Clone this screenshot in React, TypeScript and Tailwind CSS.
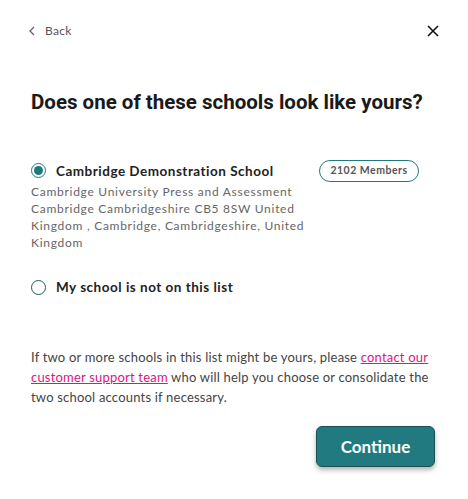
const App = () => {
  return (
    <main className="w-[468px] h-[499px] bg-white font-['Lato',sans-serif] text-[#333]">
      {/* TOP BAR */}
      <div className="flex items-center justify-between pl-[28px] pr-[29px] pt-[22px]">
        <button className="flex items-center gap-[9px] text-[12px] tracking-[0.3px] text-[#555]">
          <svg width="8" height="10" viewBox="0 0 8 10" fill="none">
            <path d="M6 1 L2 5 L6 9" stroke="#666" strokeWidth="1.3" />
          </svg>
          Back
        </button>
        <button aria-label="close">
          <svg width="12" height="12" viewBox="0 0 12 12" fill="none">
            <path d="M1 1 L11 11 M11 1 L1 11" stroke="#111" strokeWidth="1.6" />
          </svg>
        </button>
      </div>

      <div className="px-[31px]">
        <h1 className="mt-[47px] font-['Roboto',sans-serif] text-[20.5px] font-bold text-[#1a1a1a]">
          Does one of these schools look like yours?
        </h1>

        {/* OPTIONS */}
        <div className="mt-[43px] flex flex-col gap-[26px]">
          <label className="flex items-start justify-between">
            <div className="flex flex-col">
              <div className="flex items-center gap-[10px]">
                <span className="flex h-[15px] w-[15px] items-center justify-center rounded-full border-[1.5px] border-[#1f7a80]">
                  <span className="h-[9px] w-[9px] rounded-full bg-[#1f7a80]" />
                </span>
                <span className="text-[13.5px] font-bold tracking-[0.5px] text-[#222]">
                  Cambridge Demonstration School
                </span>
              </div>
              <p className="mt-[2px] w-[280px] text-[12px] leading-[17px] tracking-[0.72px] text-[#666]">
                Cambridge University Press and Assessment Cambridge
                Cambridgeshire CB5 8SW United Kingdom , Cambridge,
                Cambridgeshire, United Kingdom
              </p>
            </div>
            <span className="mr-[18px] mt-[-1px] flex h-[22px] w-[100px] shrink-0 items-center justify-center rounded-full border-[1.5px] border-[#1f7a80] text-[10.5px] font-bold tracking-[0.5px] text-[#555]">
              2102 Members
            </span>
          </label>

          <label className="flex items-center gap-[10px]">
            <span className="h-[15px] w-[15px] rounded-full border-[1.5px] border-[#1f5a66]" />
            <span className="text-[13.5px] font-bold tracking-[0.5px] text-[#222]">
              My school is not on this list
            </span>
          </label>
        </div>

        <p className="mt-[50px] text-[13px] leading-[20px] tracking-[0.2px] text-[#444]">
          If two or more schools in this list might be yours, please{" "}
          <a className="text-[#e0147f] underline">contact our customer support team</a>{" "}
          who will help you choose or consolidate the two school accounts if
          necessary.
        </p>

        <div className="mt-[19px] flex justify-end pr-[2px]">
          <button className="h-[41px] w-[119px] rounded-[6px] border border-[#1b4f55] bg-[#207a80] text-[17px] font-bold text-white shadow-[0_3px_5px_rgba(0,0,0,0.3)]">
            Continue
          </button>
        </div>
      </div>
    </main>
  );
};

export default App;
